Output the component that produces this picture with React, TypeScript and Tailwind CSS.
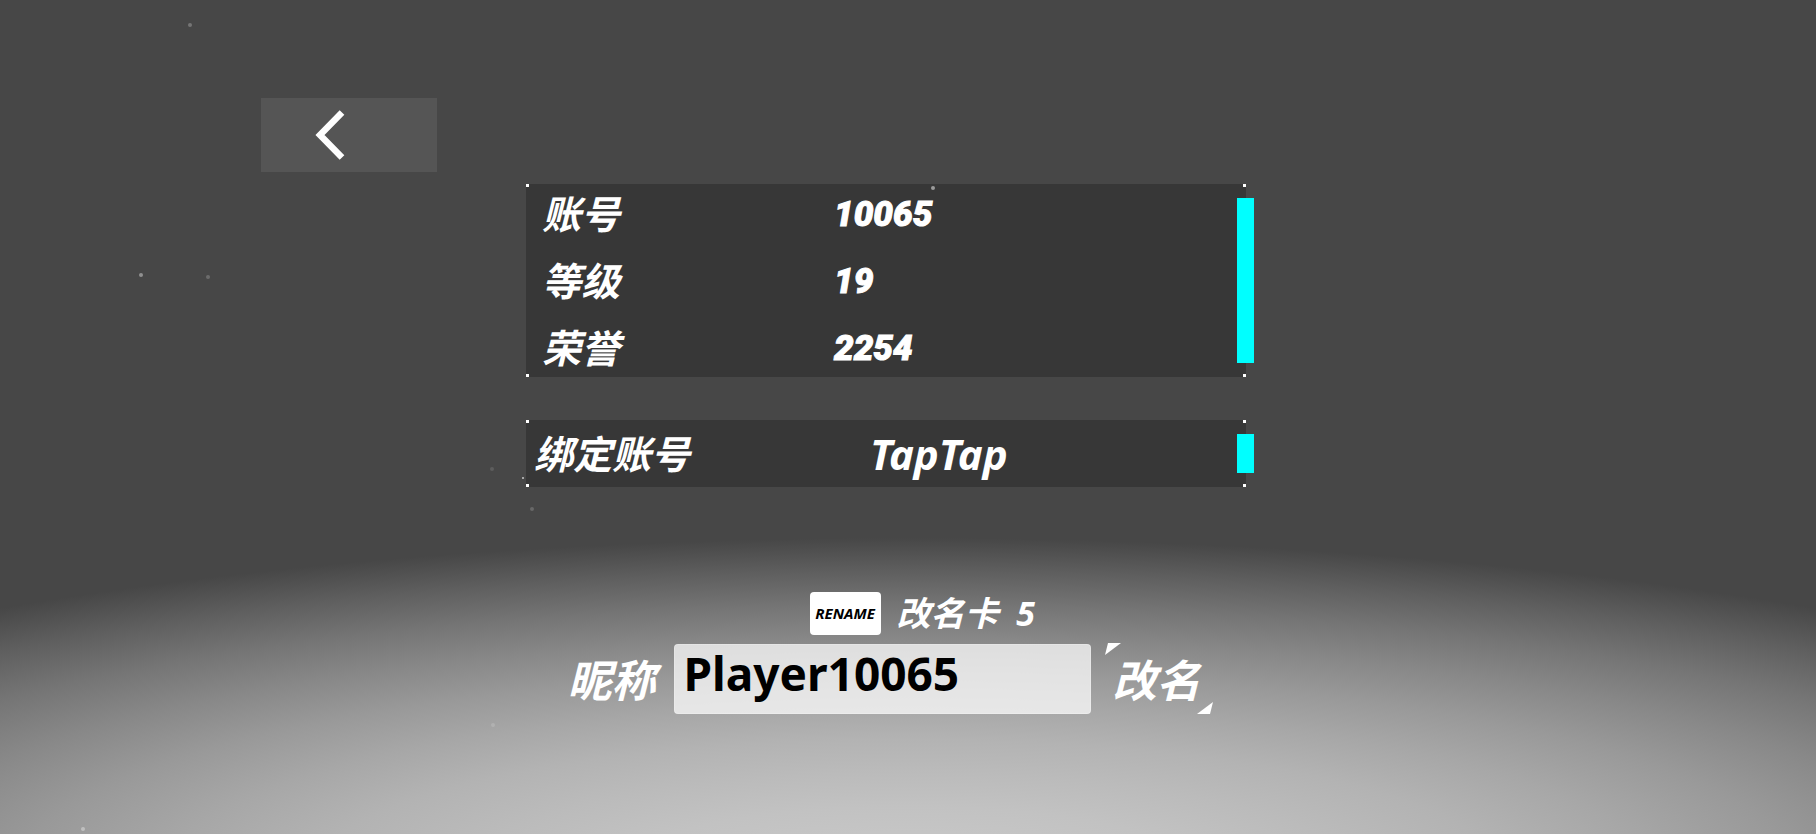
import { useState } from "react";
import type { ReactNode } from "react";

const stats = [
  { label: "账号", value: "10065" },
  { label: "等级", value: "19" },
  { label: "荣誉", value: "2254" },
];

const particles = [
  { x: 190, y: 25, r: 2, o: 0.25 },
  { x: 141, y: 275, r: 2, o: 0.4 },
  { x: 208, y: 277, r: 2, o: 0.2 },
  { x: 933, y: 188, r: 2, o: 0.5 },
  { x: 492, y: 469, r: 2, o: 0.12 },
  { x: 523, y: 478, r: 1, o: 0.7 },
  { x: 532, y: 509, r: 2, o: 0.18 },
  { x: 493, y: 725, r: 2, o: 0.15 },
  { x: 83, y: 829, r: 2, o: 0.35 },
];

function Particles() {
  return (
    <svg
      className="pointer-events-none absolute inset-0 h-full w-full"
      viewBox="0 0 1816 834"
      preserveAspectRatio="xMidYMid slice"
      aria-hidden="true"
    >
      {particles.map((p) => (
        <circle key={`${p.x}-${p.y}`} cx={p.x} cy={p.y} r={p.r} fill="#fff" opacity={p.o} />
      ))}
    </svg>
  );
}

function Panel({ children }: { children: ReactNode }) {
  return (
    <section className="relative bg-[#373737]">
      {children}
      <span className="absolute left-0 top-0 h-[3px] w-[3px] bg-white" />
      <span className="absolute bottom-0 left-0 h-[3px] w-[3px] bg-white" />
      <span className="absolute right-0 top-0 h-[3px] w-[3px] bg-white" />
      <span className="absolute bottom-0 right-0 h-[3px] w-[3px] bg-white" />
      <span className="absolute -right-2 bottom-[14px] top-[14px] w-[17px] bg-[#00ffff]" />
    </section>
  );
}

export default function App() {
  const [name, setName] = useState("Player10065");

  return (
    <div className="relative flex min-h-screen flex-col overflow-hidden bg-[#474747] bg-[radial-gradient(1483px_336px_at_50%_874px,#c7c7c7_0%,#c6c6c6_10%,#c2c2c2_20%,#bbbbbb_30%,#b3b3b3_40%,#a7a7a7_50%,#999999_60%,#888888_70%,#757575_80%,#5f5f5f_90%,#474747_100%)] font-['Noto_Sans','Noto_Sans_CJK_SC',sans-serif] font-bold text-white">
      <header className="px-[261px] pb-3 pt-[98px]">
        <button
          type="button"
          aria-label="返回"
          className="flex h-[74px] w-44 items-center bg-[#555555] pl-[54px]"
        >
          <svg width="30" height="50" viewBox="0 0 30 50" fill="none" stroke="#fff" strokeWidth="6.5">
            <path d="M27 2.5L5 25L27 47.5" />
          </svg>
        </button>
      </header>

      <main className="flex flex-col items-center pr-11 italic">
        <div className="flex w-full max-w-[720px] flex-col gap-[43px]">
          <Panel>
            <dl className="flex flex-col gap-2 pl-4 text-[39px] leading-[59px]">
              {stats.map((row) => (
                <div key={row.label} className="flex items-end">
                  <dt className="w-[292px]">{row.label}</dt>
                  <dd className="font-['Roboto',sans-serif] text-[35px] font-black leading-[57px] [-webkit-text-stroke:1px_white]">
                    {row.value}
                  </dd>
                </div>
              ))}
            </dl>
          </Panel>
          <Panel>
            <dl className="flex pl-2 text-[39px] leading-[67px]">
              <dt className="w-[336px]">绑定账号</dt>
              <dd className="text-[42px]">TapTap</dd>
            </dl>
          </Panel>
        </div>

        <form className="mt-[105px] flex flex-col gap-2 pl-2" onSubmit={(e) => e.preventDefault()}>
          <div className="flex items-center gap-4 pl-[242px]">
            <span className="flex h-[43px] w-[71px] items-center justify-center rounded bg-white text-[15px] text-black">
              RENAME
            </span>
            <span className="whitespace-pre text-[34px] leading-[43px]">改名卡  5</span>
          </div>
          <div className="flex items-center">
            <label htmlFor="nickname" className="w-[106px] pt-[3px] text-[44px] leading-[68px]">
              昵称
            </label>
            <input
              id="nickname"
              value={name}
              onChange={(e) => setName(e.target.value)}
              className="h-[70px] w-[417px] rounded border border-white/20 bg-white/72 pb-3 pl-[9px] text-[46px] not-italic text-black outline-none"
            />
            <button
              type="submit"
              className="relative ml-[14px] h-[71px] w-[108px] pr-1 pt-[3px] text-[44px] italic leading-[68px]"
            >
              改名
              <svg className="absolute left-0 top-0" width="16" height="12" viewBox="0 0 16 12" fill="#fff">
                <path d="M3 0H16L0 12Z" />
              </svg>
              <svg className="absolute bottom-0 right-0" width="16" height="12" viewBox="0 0 16 12" fill="#fff">
                <path d="M13 12H0L16 0Z" />
              </svg>
            </button>
          </div>
        </form>
      </main>

      <Particles />
    </div>
  );
}
